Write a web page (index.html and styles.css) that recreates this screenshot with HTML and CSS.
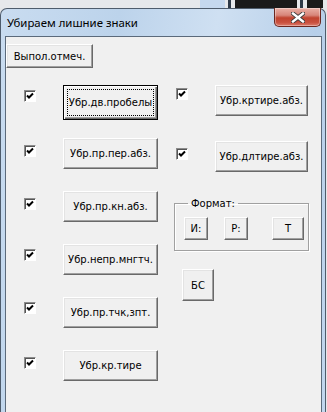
FILE: index.html
```html
<!DOCTYPE html>
<html lang="ru">
<head>
<meta charset="utf-8">
<title>Убираем лишние знаки</title>
<link rel="stylesheet" href="styles.css">
</head>
<body>
<div class="page">
  <div class="excel">
    <span class="xl-sel"></span>
    <span class="xl-line"></span>
    <span class="xl-text wide"></span>
    <span class="xl-line"></span>
    <span class="xl-text"></span>
  </div>
  <div class="window">
    <div class="titlebar">
      <span class="title">Убираем лишние знаки</span>
      <span class="close">
        <svg width="14" height="11" viewBox="0 0 14 11"><path d="M2 1.5 L12 9.5 M12 1.5 L2 9.5" stroke="#3a3a3a" stroke-width="4.2" stroke-linecap="square"/><path d="M2 1.5 L12 9.5 M12 1.5 L2 9.5" stroke="#ffffff" stroke-width="2.4" stroke-linecap="square"/></svg>
      </span>
    </div>
    <div class="client">
      <button class="btn btn-run">Выпол.отмеч.</button>
      <div class="columns">
        <div class="col-left">
          <div class="row"><span class="chk"></span><button class="btn btn-wide btn-focus">Убр.дв.пробелы</button></div>
          <div class="row"><span class="chk low"></span><button class="btn btn-wide">Убр.пр.пер.абз.</button></div>
          <div class="row"><span class="chk low"></span><button class="btn btn-wide">Убр.пр.кн.абз.</button></div>
          <div class="row"><span class="chk"></span><button class="btn btn-wide">Убр.непр.мнгтч.</button></div>
          <div class="row"><span class="chk"></span><button class="btn btn-wide">Убр.пр.тчк,зпт.</button></div>
          <div class="row"><span class="chk low"></span><button class="btn btn-wide">Убр.кр.тире</button></div>
        </div>
        <div class="col-right">
          <div class="row r1"><span class="chk high"></span><button class="btn btn-wide2">Убр.кртире.абз.</button></div>
          <div class="row r2"><span class="chk low"></span><button class="btn btn-wide2">Убр.длтире.абз.</button></div>
          <fieldset class="format">
            <legend>Формат:</legend>
            <div class="fmt-row">
              <button class="btn btn-sm">И:</button>
              <button class="btn btn-sm">Р:</button>
              <button class="btn btn-t">Т</button>
            </div>
          </fieldset>
          <button class="btn btn-bs">БС</button>
        </div>
      </div>
    </div>
  </div>
</div>
</body>
</html>
```
FILE: styles.css
```css
* { box-sizing: border-box; }
html, body { margin: 0; padding: 0; }
body {
  width: 327px;
  height: 412px;
  overflow: hidden;
  background: #e4e6e9;
}
.page { width: 327px; height: 412px; overflow: hidden; }

.excel {
  height: 8px;
  display: flex;
  background: #e6e8eb;
  padding-left: 200px;
}
.xl-sel { width: 25px; background: #c5d8ee; }
.xl-line { width: 3px; background: #2e3a48; margin-left: 3px; }
.xl-text { width: 16px; background: #1a1a1a; margin-left: 4px; }
.xl-text.wide { width: 62px; }

.window {
  width: 326px;
  height: 420px;
  border: 1px solid #4e5c6c;
  border-bottom: none;
  border-radius: 7px 7px 0 0;
  background: linear-gradient(100deg, #c9dcf0 0%, #bcd3eb 30%, #cfe0f2 55%, #b7cfe9 80%, #c2d7ee 100%);
  display: flex;
  flex-direction: column;
}

.titlebar {
  height: 27px;
  display: flex;
  align-items: flex-start;
  padding-left: 6px;
}
.title {
  font-family: "Noto Sans", sans-serif;
  font-size: 11.4px;
  line-height: 16px;
  color: #000;
  margin-top: 6px;
}
.close {
  margin-left: auto;
  margin-right: 4px;
  margin-top: -1px;
  width: 47px;
  height: 19px;
  border: 1px solid #6b2720;
  border-top: none;
  border-radius: 0 0 5px 5px;
  background: linear-gradient(#eab0a6 0%, #d8867a 40%, #c0432f 55%, #c9503e 80%, #dc7c6c 100%);
  box-shadow: inset 0 0 0 1px rgba(255,255,255,0.35);
  display: flex;
  align-items: center;
  justify-content: center;
}
.close svg { display: block; }

.client {
  margin: 0 3px 0 4px;
  flex: 1;
  border: 1px solid #5b6a7b;
  background: #f0f0f0;
  padding-top: 7px;
  font-family: "DejaVu Sans", sans-serif;
  font-size: 10px;
  color: #000;
}

.btn {
  display: flex;
  align-items: center;
  justify-content: center;
  margin: 0;
  padding: 0;
  font-family: "DejaVu Sans", sans-serif;
  font-size: 10px;
  color: #000;
  background: #f0f0f0;
  border: 1px solid;
  border-color: #ffffff #696969 #696969 #ffffff;
  box-shadow: inset -1px -1px #a0a0a0, inset 1px 1px #e3e3e3;
  white-space: nowrap;
}
.btn-run { width: 87px; height: 24px; }
.btn-wide { width: 95px; height: 31px; }
.btn-wide2 { width: 93px; height: 31px; }
.btn-focus {
  height: 35px;
  border: 1px solid #000;
  box-shadow: inset 1px 1px #fff, inset -1px -1px #696969, inset -2px -2px #a0a0a0;
  outline: 1px dotted #000;
  outline-offset: -5px;
}
.btn-sm { width: 24px; height: 23px; }
.btn-t { width: 32px; height: 23px; }
.btn-bs { width: 32px; height: 32px; margin-left: 8px; margin-top: 18px; }

.columns {
  display: flex;
  margin-top: 17px;
}
.col-left {
  margin-left: 18px;
  width: 134px;
  display: flex;
  flex-direction: column;
  gap: 22px;
}
.col-left .row:first-child + .row { margin-top: -4px; }
.row {
  display: flex;
  align-items: flex-start;
}
.chk {
  width: 12px;
  height: 12px;
  margin-top: 5px;
  margin-right: 27px;
  border: 1px solid;
  border-color: #8c8c8c #ffffff #ffffff #8c8c8c;
  box-shadow: inset 1px 1px #555;
  background: #fff url("data:image/svg+xml;utf8,<svg xmlns='http://www.w3.org/2000/svg' width='10' height='10'><path d='M2 4.5 L4 6.5 L8 2.5' stroke='black' stroke-width='2' fill='none'/></svg>") no-repeat 0 0;
}
.chk.low { margin-top: 7px; }
.chk.high { margin-top: 3px; }

.col-right {
  margin-left: 16px;
  display: flex;
  flex-direction: column;
}
.col-right .row .chk { margin-left: 2px; }
.r2 { margin-top: 25px; }

.format {
  margin: 25px 0 0 0;
  width: 135px;
  height: 54px;
  padding: 7px 0 0 9px;
  border: 1px solid #a0a0a0;
  box-shadow: 1px 1px #fff, inset 1px 1px #fff;
  min-inline-size: 0;
}
.format legend {
  margin-left: 4px;
  padding: 0 3px;
  font-size: 10px;
  line-height: 13px;
}
.fmt-row {
  display: flex;
  gap: 16px;
}
.fmt-row .btn-t { margin-left: 8px; }
```
